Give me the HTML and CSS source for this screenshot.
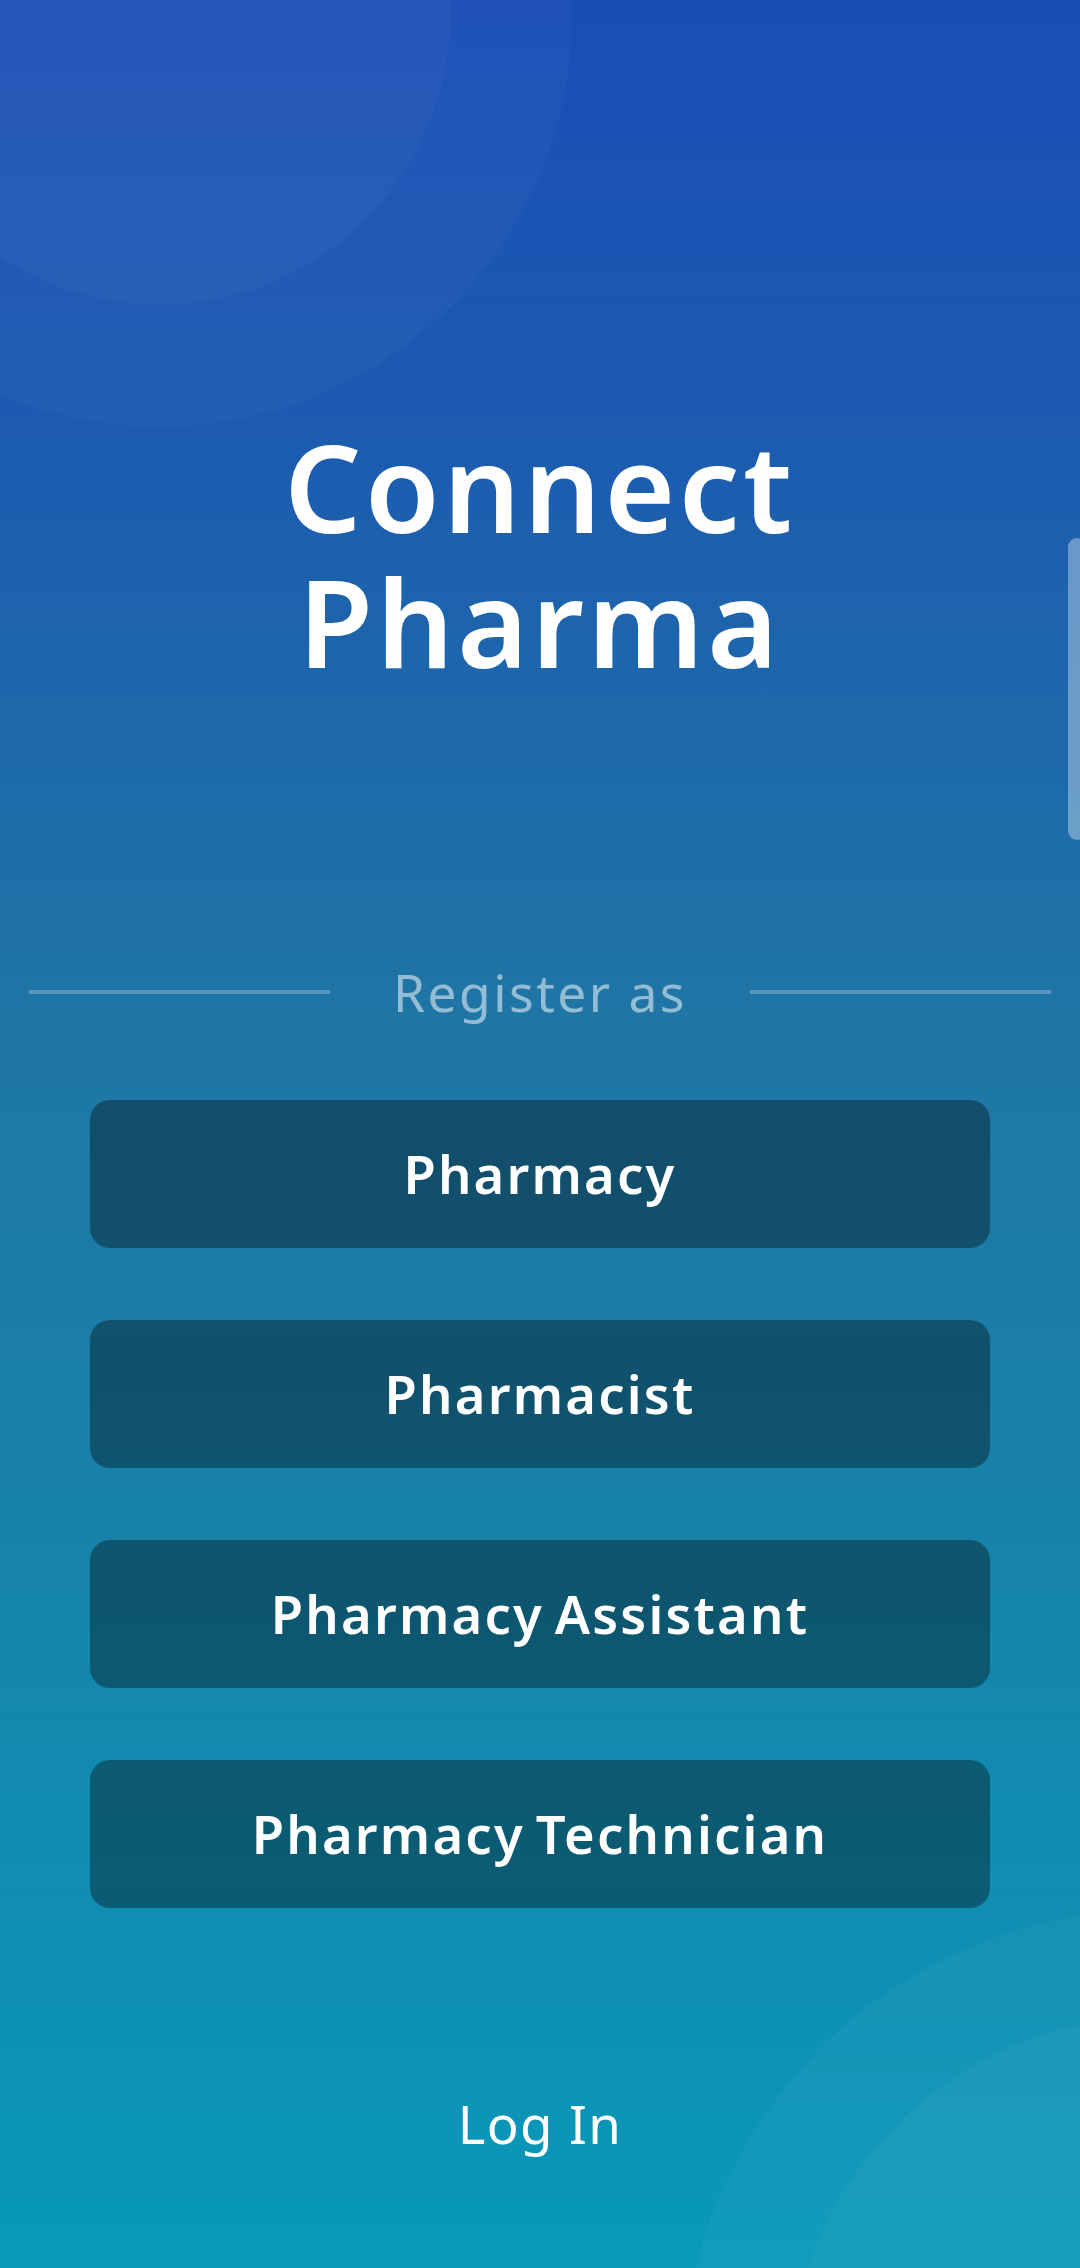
FILE: index.html
```html
<!DOCTYPE html>
<html lang="en">
<head>
<meta charset="utf-8">
<title>Connect Pharma</title>
<link rel="stylesheet" href="styles.css">
</head>
<body>
<div class="screen">
  <div class="deco deco-tl-outer"></div>
  <div class="deco deco-tl-inner"></div>
  <div class="deco deco-br-outer"></div>
  <div class="deco deco-br-inner"></div>

  <main class="content">
    <h1 class="title"><span class="title-line">Connect</span><span class="title-line">Pharma</span></h1>

    <div class="divider">
      <span class="divider-line"></span>
      <span class="divider-text">Register as</span>
      <span class="divider-line"></span>
    </div>

    <div class="roles">
      <button class="role-btn">Pharmacy</button>
      <button class="role-btn">Pharmacist</button>
      <button class="role-btn">Pharmacy Assistant</button>
      <button class="role-btn">Pharmacy Technician</button>
    </div>

    <a class="login" href="#">Log In</a>
  </main>

  <div class="scrollbar"></div>
</div>
</body>
</html>
```
FILE: styles.css
```css
* { box-sizing: border-box; }

html, body {
  margin: 0;
  padding: 0;
}

body {
  font-family: "Noto Sans", "Open Sans", sans-serif;
  color: #ffffff;
}

.screen {
  position: relative;
  width: 1080px;
  height: 2268px;
  overflow: hidden;
  background: linear-gradient(180deg,
    #1a4eb7 0%,
    #1c5cb0 20%,
    #1f76a5 45%,
    #1783aa 68%,
    #0899ba 100%);
}

.deco {
  position: absolute;
  border-radius: 50%;
  background: rgba(255, 255, 255, 0.028);
}

.deco-tl-outer {
  width: 824px;
  height: 824px;
  left: -252px;
  top: -397px;
}

.deco-tl-inner {
  width: 580px;
  height: 580px;
  left: -130px;
  top: -275px;
}

.deco-br-outer {
  width: 954px;
  height: 954px;
  left: 680px;
  top: 1909px;
  background: rgba(255, 255, 255, 0.035);
}

.deco-br-inner {
  width: 738px;
  height: 738px;
  left: 788px;
  top: 2017px;
  background: rgba(255, 255, 255, 0.035);
}

.content {
  position: relative;
  z-index: 1;
  display: flex;
  flex-direction: column;
  align-items: stretch;
  padding-top: 419px;
}

.title {
  margin: 0;
  display: flex;
  flex-direction: column;
  align-items: center;
  font-size: 121px;
  line-height: 135px;
  font-weight: 600;
  letter-spacing: 3.5px;
  color: #ffffff;
}

.title-line {
  display: block;
  height: 135px;
}

.divider {
  margin-top: 273px;
  height: 60px;
  padding: 0 29px;
  display: flex;
  align-items: center;
}

.divider-line {
  flex: 1;
  height: 4px;
  background: rgba(255, 255, 255, 0.26);
}

.divider-text {
  margin: 0 63px;
  font-size: 51.5px;
  line-height: 60px;
  font-weight: 400;
  letter-spacing: 2.5px;
  color: rgba(255, 255, 255, 0.52);
  white-space: nowrap;
}

.roles {
  margin-top: 78px;
  padding: 0 90px;
  display: flex;
  flex-direction: column;
  gap: 72px;
}

.role-btn {
  height: 148px;
  border: none;
  border-radius: 20px;
  background: rgba(0, 0, 0, 0.35);
  color: #ffffff;
  font-family: "Noto Sans", "Open Sans", sans-serif;
  font-size: 52.5px;
  line-height: 60px;
  font-weight: 600;
  letter-spacing: 2.2px;
  word-spacing: -5px;
  display: flex;
  align-items: center;
  justify-content: center;
  padding: 0;
  cursor: pointer;
}

.login {
  margin-top: 186px;
  align-self: center;
  font-size: 52.8px;
  line-height: 60px;
  font-weight: 400;
  letter-spacing: 1.4px;
  color: #ffffff;
  text-decoration: none;
}

.scrollbar {
  position: absolute;
  right: -6px;
  top: 538px;
  width: 18px;
  height: 302px;
  border-radius: 9px;
  background: rgba(255, 255, 255, 0.35);
  z-index: 2;
}
```
